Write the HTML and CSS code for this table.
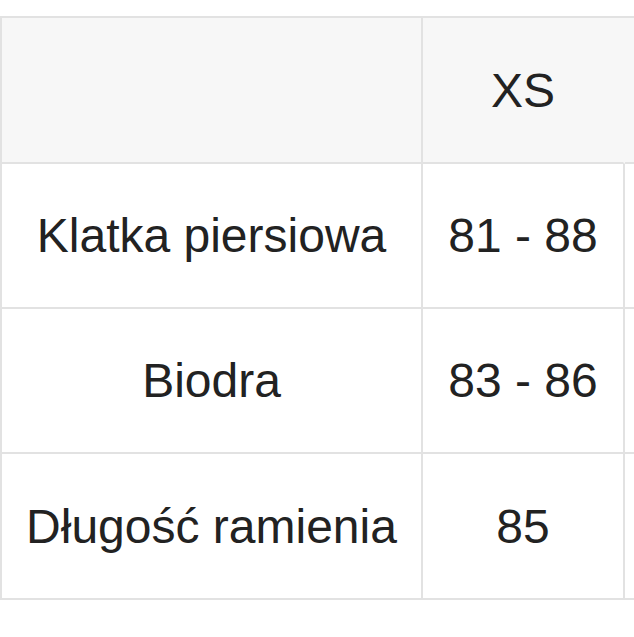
FILE: index.html
```html
<!DOCTYPE html>
<html lang="pl">
<head>
<meta charset="utf-8">
<title>Tabela rozmiarów</title>
<link rel="stylesheet" href="styles.css">
</head>
<body>
<div class="wrap">
  <div class="table">
    <div class="row head">
      <div class="cell name"></div>
      <div class="cell size">XS</div>
      <div class="cell size"></div>
    </div>
    <div class="row r-a">
      <div class="cell name">Klatka piersiowa</div>
      <div class="cell size">81 - 88</div>
      <div class="cell size"></div>
    </div>
    <div class="row r-b">
      <div class="cell name">Biodra</div>
      <div class="cell size">83 - 86</div>
      <div class="cell size"></div>
    </div>
    <div class="row r-a last">
      <div class="cell name">Długość ramienia</div>
      <div class="cell size">85</div>
      <div class="cell size"></div>
    </div>
  </div>
</div>
</body>
</html>
```

FILE: styles.css
```css
html, body {
  margin: 0;
  padding: 0;
  background: #ffffff;
}
.wrap {
  width: 634px;
  height: 637px;
  overflow: hidden;
  padding-top: 16px;
  box-sizing: border-box;
}
.table {
  display: inline-flex;
  flex-direction: column;
  border-top: 2px solid #e2e2e2;
  border-left: 2px solid #e2e2e2;
  font-family: "Liberation Sans", Arial, sans-serif;
  font-size: 48px;
  color: #222222;
}
.row {
  display: flex;
  height: 145px;
}
.row.head {
  height: 146px;
  background: #f7f7f7;
}
.row.last {
  height: 146px;
}
.cell {
  box-sizing: border-box;
  border-right: 2px solid #e2e2e2;
  border-bottom: 2px solid #e2e2e2;
  display: flex;
  align-items: center;
  justify-content: center;
  white-space: nowrap;
}
.row.head .cell.size {
  border-right-color: #f7f7f7;
}
.name {
  width: 421px;
}
.size {
  width: 202px;
}
```
